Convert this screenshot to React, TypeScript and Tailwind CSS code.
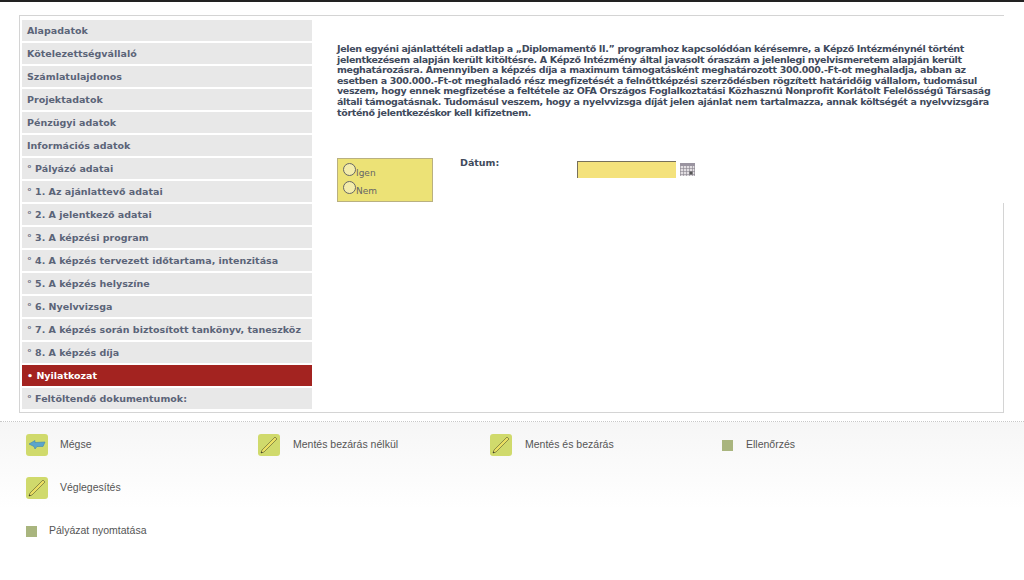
// Application form page: section menu on the left, declaration text and actions below

const MENU = [
  'Alapadatok',
  'Kötelezettségvállaló',
  'Számlatulajdonos',
  'Projektadatok',
  'Pénzügyi adatok',
  'Információs adatok',
  '° Pályázó adatai',
  '° 1. Az ajánlattevő adatai',
  '° 2. A jelentkező adatai',
  '° 3. A képzési program',
  '° 4. A képzés tervezett időtartama, intenzitása',
  '° 5. A képzés helyszíne',
  '° 6. Nyelvvizsga',
  '° 7. A képzés során biztosított tankönyv, taneszköz',
  '° 8. A képzés díja',
  '• Nyilatkozat',
  '° Feltöltendő dokumentumok:',
]

const ACTIVE = '• Nyilatkozat'

const TEXT_LINES = [
  'Jelen egyéni ajánlattételi adatlap a „Diplomamentő II.” programhoz kapcsolódóan kérésemre, a Képző Intézménynél történt',
  'jelentkezésem alapján került kitöltésre. A Képző Intézmény által javasolt óraszám a jelenlegi nyelvismeretem alapján került',
  'meghatározásra. Amennyiben a képzés díja a maximum támogatásként meghatározott 300.000.-Ft-ot meghaladja, abban az',
  'esetben a 300.000.-Ft-ot meghaladó rész megfizetését a felnőttképzési szerződésben rögzített határidőig vállalom, tudomásul',
  'veszem, hogy ennek megfizetése a feltétele az OFA Országos Foglalkoztatási Közhasznú Nonprofit Korlátolt Felelősségű Társaság',
  'általi támogatásnak. Tudomásul veszem, hogy a nyelvvizsga díját jelen ajánlat nem tartalmazza, annak költségét a nyelvvizsgára',
  'történő jelentkezéskor kell kifizetnem.',
]

const PencilIcon = () => (
  <div className="w-[22px] h-[22px] shrink-0 rounded-[3px] bg-[#d0da6c] flex items-center justify-center">
    <svg width="20" height="20" viewBox="0 0 20 20" fill="none">
      <path d="M2 18 L3 15 L16 2 L18 4 L5 17 Z" fill="#eadf62" stroke="#6a6a35" strokeWidth="0.7" />
      <path d="M2 18 L3.6 17.4 L2.6 16.4 Z" fill="#222222" />
    </svg>
  </div>
)

const BackIcon = () => (
  <div className="w-[22px] h-[22px] shrink-0 rounded-[3px] bg-[#d0da6c] flex items-center justify-center">
    <svg width="18" height="14" viewBox="0 0 18 14">
      <path d="M1 6 L7 2.5 L7 4.5 L17 4 L15 8.5 L9 8.5 L7 11 L6 8.5 Z" fill="#5aa5cc" stroke="#3f86ad" strokeWidth="0.6" />
    </svg>
  </div>
)

const Square = () => <div className="w-[11px] h-[11px] shrink-0 bg-[#a9b57e]" />

const Action = ({ icon, label, width, gap }: { icon: React.ReactNode; label: string; width: string; gap: string }) => (
  <div className={`flex items-center ${width} ${gap}`}>
    {icon}
    <span>{label}</span>
  </div>
)

export default function App() {
  return (
    <div className="w-[1024px] h-[580px] overflow-hidden bg-white font-['DejaVu_Sans',sans-serif]">
      <div className="h-[2px] bg-[#222222]" />

      {/* Main panel */}
      <div className="ml-[19px] mt-[13px] w-[985px] h-[398px] flex border-l border-t border-b border-[#d4d4d4]">
        <div className="w-[292px] pl-[2px] pt-[4px] flex flex-col gap-[2px] shrink-0">
          {MENU.map((item) => (
            <div
              key={item}
              className={
                item === ACTIVE
                  ? 'h-[21px] flex items-center pl-[5px] pt-[2px] text-[9.5px] font-bold whitespace-nowrap bg-[#a32320] text-white'
                  : 'h-[21px] flex items-center pl-[5px] pt-[2px] text-[9.5px] font-bold whitespace-nowrap bg-[#e8e8e8] text-[#5b6478]'
              }
            >
              {item}
            </div>
          ))}
        </div>

        <div className="flex-1 flex flex-col">
          <div className="h-[187px] pl-[25px] pt-[28px]">
            <div className="text-[9.5px] tracking-[-0.34px] leading-[10.6px] font-bold text-[#3f4a5c] whitespace-nowrap">
              {TEXT_LINES.map((line) => (
                <div key={line}>{line}</div>
              ))}
            </div>
            <div className="flex mt-[40px]">
              <div className="w-[96px] h-[44px] border border-[#b9b080] bg-[#ece276] pl-[5px] pt-[4px] text-[9px] text-[#666666] shrink-0">
                <div className="flex items-start h-[18px]">
                  <span className="w-[13px] h-[13px] rounded-full border-[1.5px] border-[#666666] bg-[#f3ecaa]" />
                  <span className="mt-[4px]">Igen</span>
                </div>
                <div className="flex items-start h-[18px]">
                  <span className="w-[13px] h-[13px] rounded-full border-[1.5px] border-[#666666] bg-[#f3ecaa]" />
                  <span className="mt-[4px]">Nem</span>
                </div>
              </div>
              <div className="ml-[27px] -mt-[2px] text-[9.5px] font-bold text-[#3f4a5c] w-[117px]">Dátum:</div>
              <div className="w-[99px] h-[17px] mt-[3px] bg-[#f4e27c] border-t border-l border-[#77705a]" />
              <svg className="ml-[4px] mt-[5px]" width="15" height="13" viewBox="0 0 15 13">
                <rect x="0" y="0" width="15" height="13" fill="#e2dee2" />
                <rect x="0" y="0" width="15" height="3" fill="#9a94a0" />
                <path d="M0.5 3V13M3.5 3V13M6.5 3V13M9.5 3V13M12.5 3V13M14.5 3V13M0 5.5H15M0 8.5H15M0 11.5H15" stroke="#8a858e" strokeWidth="0.6" />
                <rect x="9.5" y="8.5" width="3" height="3" fill="#555555" />
              </svg>
            </div>
          </div>
          <div className="flex-1 border-r border-[#d4d4d4]" />
        </div>
      </div>

      {/* Actions */}
      <div className="mt-[8px] h-[159px] border-t border-dotted border-[#c8c8c8] bg-linear-to-b from-[#f6f6f6] to-white to-[55%] pl-[26px] pt-[12px] font-['Liberation_Sans',sans-serif] text-[10.5px] text-[#555555]">
        <div className="flex h-[22px]">
          <Action icon={<BackIcon />} label="Mégse" width="w-[232px]" gap="gap-[12px]" />
          <Action icon={<PencilIcon />} label="Mentés bezárás nélkül" width="w-[232px]" gap="gap-[13px]" />
          <Action icon={<PencilIcon />} label="Mentés és bezárás" width="w-[232px]" gap="gap-[13px]" />
          <Action icon={<Square />} label="Ellenőrzés" width="w-[200px]" gap="gap-[13px]" />
        </div>
        <div className="flex h-[22px] mt-[21px]">
          <Action icon={<PencilIcon />} label="Véglegesítés" width="w-[232px]" gap="gap-[12px]" />
        </div>
        <div className="flex h-[22px] mt-[21px]">
          <Action icon={<Square />} label="Pályázat nyomtatása" width="w-[232px]" gap="gap-[12px]" />
        </div>
      </div>
    </div>
  )
}
